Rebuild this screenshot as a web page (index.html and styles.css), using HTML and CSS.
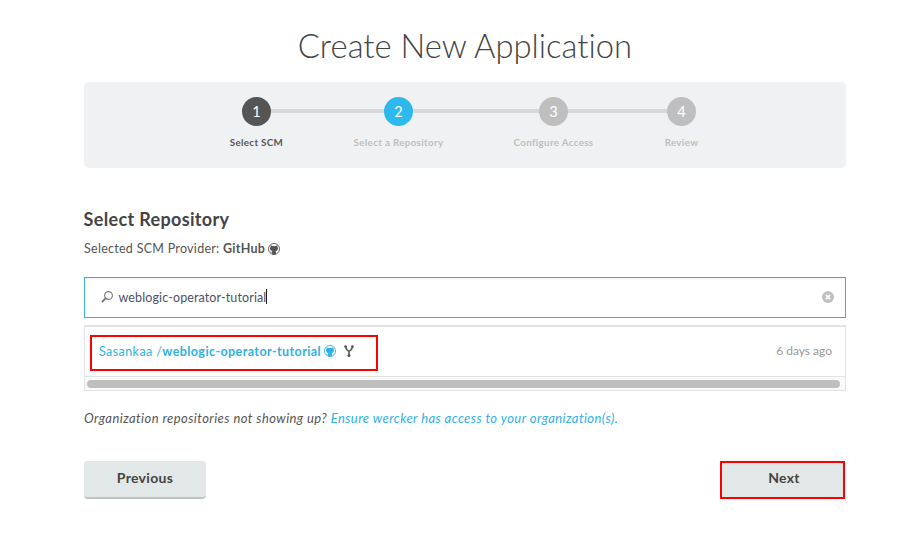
FILE: index.html
```html
<!DOCTYPE html>
<html lang="en">
<head>
<meta charset="utf-8">
<title>Create New Application</title>
<link rel="stylesheet" href="styles.css">
</head>
<body>
<svg class="defs" width="0" height="0">
  <symbol id="github" viewBox="0 0 12 12">
    <circle cx="6" cy="6" r="5.500" fill="none" stroke="currentColor" stroke-width=".9"/>
    <path fill="currentColor" d="M2.700 2.200l1.600.9q1.700-.3 3.400 0l1.600-.9.2 1.700q.7.800.5 2-.4 1.800-2.400 2.100.4.400.4 1v2.300H4V9.900q-1.200.2-1.600-.8l-.5-.6q.8-.1 1.200.7.4.300.9.100 0-.9.400-1.300-2-.3-2.400-2.100-.2-1.200.5-2z"/>
  </symbol>
</svg>
<main class="wizard">
  <h1 class="title">Create New Application</h1>
  <ol class="steps">
    <li class="step done"><span class="dot">1</span><span class="label">Select SCM</span></li>
    <li class="step current"><span class="dot">2</span><span class="label">Select a Repository</span></li>
    <li class="step"><span class="dot">3</span><span class="label">Configure Access</span></li>
    <li class="step"><span class="dot">4</span><span class="label">Review</span></li>
  </ol>
  <h2 class="heading"><span>Select Repository</span></h2>
  <p class="provider"><span>Selected SCM Provider: <b>GitHub</b></span><svg class="gh"><use href="#github"/></svg></p>
  <div class="search">
    <svg class="lens" viewBox="0 0 12 12"><circle cx="7.500" cy="4.500" r="3.900" fill="none" stroke="#777" stroke-width="1.100"/><path d="M4.600 7.400L1 11" stroke="#777" stroke-width="1.900" fill="none"/></svg>
    <span class="query">weblogic-operator-tutorial</span><i class="caret"></i>
    <svg class="clear" viewBox="0 0 12 12"><circle cx="6" cy="6" r="6" fill="#bfbfbf"/><path d="M3.900 3.900l4.200 4.200M8.100 3.900L3.900 8.100" stroke="#fff" stroke-width="1.700"/></svg>
  </div>
  <div class="results">
    <div class="repo">
      <a class="match"><span class="owner">Sasankaa /</span><b class="name">weblogic-operator-tutorial</b><svg class="gh"><use href="#github"/></svg><svg class="fork" viewBox="0 0 10 12"><path d="M1.700 2q.2 2 1.500 3L5 6.500 6.800 5q1.300-1 1.500-3M5 6.500V10" fill="none" stroke="#555" stroke-width="1.600"/><circle cx="1.600" cy="1.600" r="1.400" fill="#555"/><circle cx="8.400" cy="1.600" r="1.400" fill="#555"/><circle cx="5" cy="10.400" r="1.500" fill="#555"/></svg></a>
      <span class="age">6 days ago</span>
    </div>
    <div class="track"><div class="thumb"></div></div>
  </div>
  <p class="hint"><span class="ask">Organization repositories not showing up?</span> <a>Ensure wercker has access to your organization(s).</a></p>
  <div class="actions">
    <button class="btn">Previous</button>
    <button class="btn marked">Next</button>
  </div>
</main>
</body>
</html>
```
FILE: styles.css
```css
* { box-sizing: border-box; }
body { margin: 0; background: #fff; color: #555; font-family: Lato, sans-serif; font-size: 13px; font-variant-ligatures: none; }
h1, h2, p, ol { margin: 0; padding: 0; }
.defs { display: block; }
.wizard { width: 762px; margin-left: 84px; padding-top: 22px; white-space: nowrap; }
.title { height: 60px; line-height: 47px; font-size: 32.8px; font-weight: 300; text-align: center; color: #444; }
.steps { display: flex; height: 86px; padding: 15px 0 0 110.5px; list-style: none; background: #f0f1f3; border-radius: 5px; }
.step { display: flex; flex-direction: column; align-items: center; width: 124px; color: #bfbfbf; background: linear-gradient(#d7d8d9, #d7d8d9) 0 12px / 100% 4px no-repeat; }
.step:nth-child(1) { background-position: 100% 12px; background-size: 50% 4px; }
.step:nth-child(2) { width: 160px; }
.step:nth-child(3) { width: 150px; }
.step:nth-child(4) { width: 106px; background-size: 50% 4px; }
.dot { width: 29px; height: 29px; border-radius: 50%; background: #bfbfbf; color: #fff; font-size: 14.5px; line-height: 29px; text-align: center; }
.label { margin-top: 9px; font-size: 9.8px; line-height: 14px; font-weight: 700; letter-spacing: .33px; }
.done { color: #555; }
.done .dot { background: #555; }
.current .dot { background: #2eb9ec; }
.heading { margin: 39px 0 0 -.5px; height: 24px; font-size: 18px; line-height: 24px; letter-spacing: .34px; color: #444; }
.provider { display: flex; align-items: center; gap: 3px; margin-top: 9px; height: 18px; line-height: 18px; font-size: 12.5px; letter-spacing: .28px; }
.gh { width: 12px; height: 12px; }
.search { display: flex; align-items: center; height: 41px; margin-top: 19px; padding: 0 11px 2px 16px; border: 1px solid #3aaede; box-shadow: inset 0 1px 2px #0001; color: #485268; }
.query { padding-top: 2px; font-size: 12.5px; letter-spacing: .12px; }
.lens { width: 12px; height: 12px; margin-right: 5.5px; }
.caret { width: 1px; height: 15px; background: #222; }
.clear { width: 12px; height: 12px; margin-left: auto; }
.results { height: 66px; margin-top: 7px; border: 1px solid #e2e4e4; border-top-width: 2px; }
.repo { display: flex; align-items: center; justify-content: space-between; height: 49px; padding: 2px 13px 0 5px; }
.match { display: flex; align-items: center; width: 288px; height: 36px; padding: 0 0 3px 7px; border: 2px solid #f00; color: #2fb1e7; font-size: 12.5px; letter-spacing: .42px; }
.match .gh { margin-left: 3px; }
.fork { width: 10px; height: 12px; margin-left: 8px; }
.age { padding-bottom: 5px; color: #999; font-size: 12px; }
.track { height: 14px; padding: 3px 5px 0 2px; border-top: 1px solid #e2e4e4; background: #fafafa; }
.thumb { height: 8px; border-radius: 4px; background: #bfbfbf; }
.hint { margin-top: 18px; height: 18px; line-height: 18px; font-style: italic; letter-spacing: .43px; }
.hint a { color: #2fb1e7; }
.actions { display: flex; justify-content: space-between; margin-top: 34px; padding-right: 1px; }
.btn { width: 122px; height: 38px; padding: 0 0 4px; border: 0; border-bottom: 2px solid #bfc4c3; border-radius: 4px; background: #e2e8e7; color: #444; font: 700 14px Lato, sans-serif; letter-spacing: .3px; }
.marked { width: 125px; border: 2px solid #f00; border-radius: 0; padding: 0 0 5px 3px; }
```
